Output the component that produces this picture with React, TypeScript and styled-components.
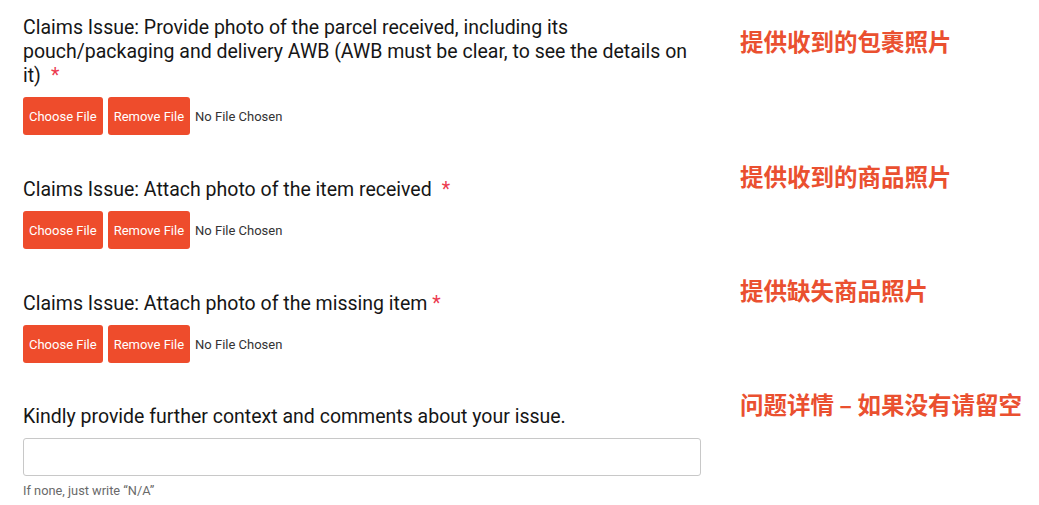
import styled, { createGlobalStyle } from "styled-components";

const GlobalStyle = createGlobalStyle`
  html, body {
    margin: 0;
    padding: 0;
    background: #ffffff;
  }
  body {
    font-family: Roboto, "Liberation Sans", Arial, sans-serif;
  }
`;

const Page = styled.div`
  padding: 0 0 0 23px;
`;

const Row = styled.div`
  display: grid;
  grid-template-columns: 678px auto;
  column-gap: 39px;
`;

const Field = styled.div<{ $top: number }>`
  padding-top: ${(p) => p.$top}px;
  display: flex;
  flex-direction: column;
  align-items: flex-start;
`;

const Label = styled.div`
  font-size: 19.5px;
  font-weight: 400;
  line-height: 24px;
  color: #161616;
  margin-bottom: 9px;
`;

const Req = styled.span<{ $gap: number }>`
  color: #ec3a4f;
  margin-left: ${(p) => p.$gap}px;
`;

const FileRow = styled.div`
  display: flex;
  align-items: center;
  gap: 5px;
`;

const FileButton = styled.button`
  height: 38px;
  padding: 0 6px;
  border: none;
  border-radius: 3px;
  background: #ee4c2c;
  color: #ffffff;
  font-family: Roboto, "Liberation Sans", Arial, sans-serif;
  font-size: 13px;
  cursor: pointer;
`;

const NoFile = styled.span`
  font-size: 13px;
  color: #333333;
`;

const TextInput = styled.input`
  box-sizing: border-box;
  width: 678px;
  height: 38px;
  border: 1px solid #c8c8c8;
  border-radius: 3px;
  padding: 0 10px;
  font-family: Roboto, "Liberation Sans", Arial, sans-serif;
  font-size: 14px;
  outline: none;
`;

const Helper = styled.div`
  margin-top: 7px;
  font-size: 12.8px;
  color: #6a6a6a;
`;

const Note = styled.div`
  padding-top: 27px;
  font-family: "Noto Sans CJK SC", "Noto Sans", sans-serif;
  font-size: 23.5px;
  line-height: 28px;
  font-weight: 700;
  color: #ea5030;
  white-space: nowrap;
`;

const FileControls = () => (
  <FileRow>
    <FileButton>Choose File</FileButton>
    <FileButton>Remove File</FileButton>
    <NoFile>No File Chosen</NoFile>
  </FileRow>
);

export default function App() {
  return (
    <Page>
      <GlobalStyle />
      <Row>
        <Field $top={16}>
          <Label>
            Claims Issue: Provide photo of the parcel received, including its
            pouch/packaging and delivery AWB (AWB must be clear, to see the
            details on it)
            <Req $gap={10}>*</Req>
          </Label>
          <FileControls />
        </Field>
        <Note>提供收到的包裹照片</Note>
      </Row>
      <Row>
        <Field $top={43}>
          <Label>
            Claims Issue: Attach photo of the item received
            <Req $gap={10}>*</Req>
          </Label>
          <FileControls />
        </Field>
        <Note>提供收到的商品照片</Note>
      </Row>
      <Row>
        <Field $top={43}>
          <Label>
            Claims Issue: Attach photo of the missing item <Req $gap={0}>*</Req>
          </Label>
          <FileControls />
        </Field>
        <Note>提供缺失商品照片</Note>
      </Row>
      <Row>
        <Field $top={42}>
          <Label>Kindly provide further context and comments about your issue.</Label>
          <TextInput type="text" />
          <Helper>If none, just write “N/A”</Helper>
        </Field>
        <Note>问题详情 – 如果没有请留空</Note>
      </Row>
    </Page>
  );
}
